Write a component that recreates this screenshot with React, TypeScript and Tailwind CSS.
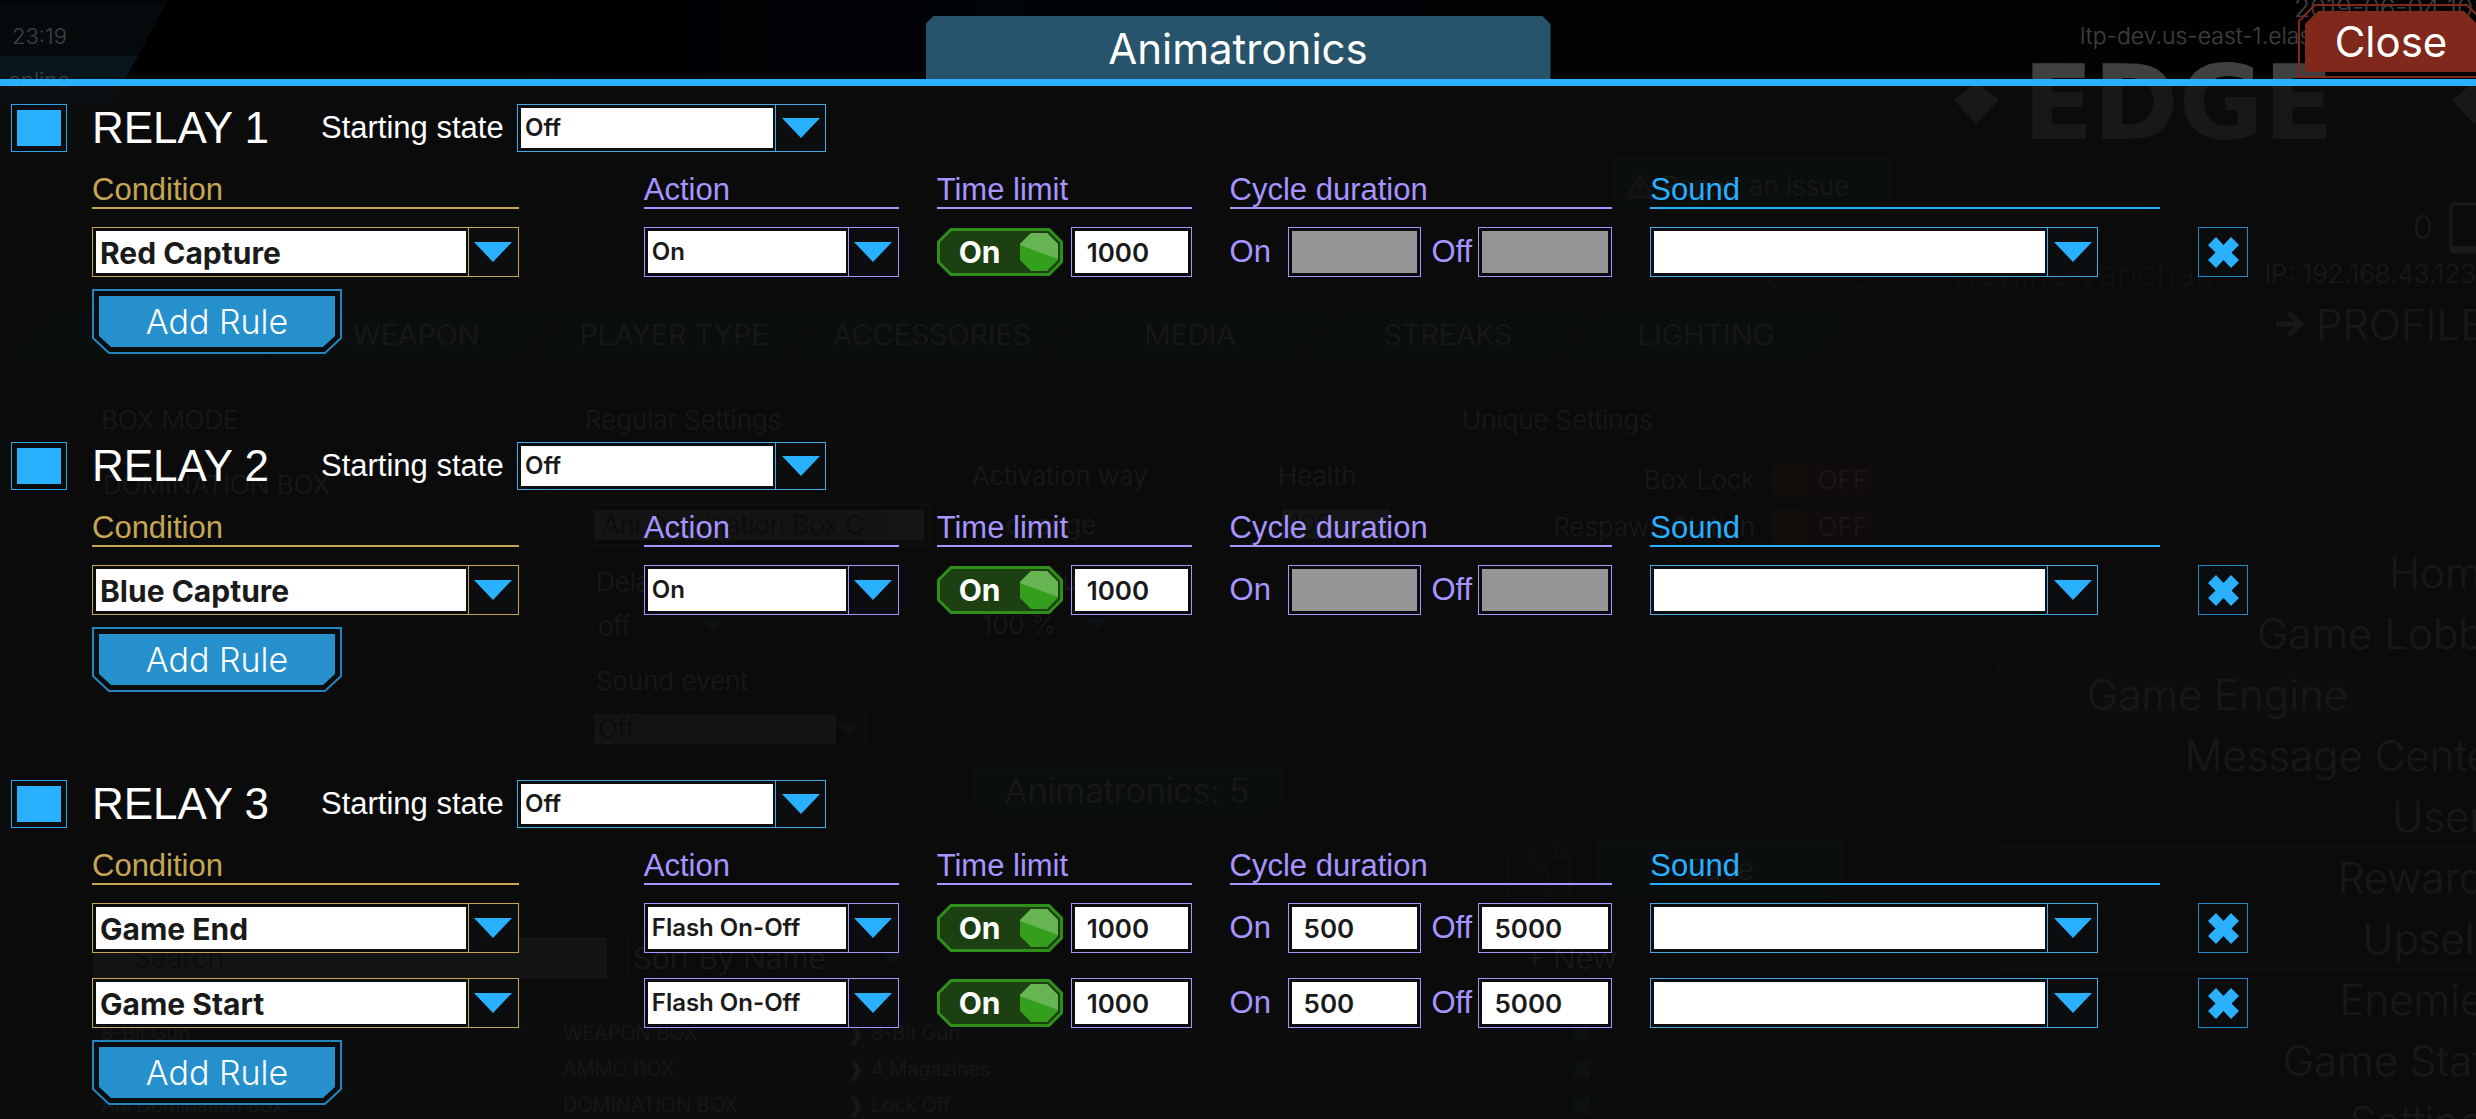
import { useState } from 'react'

type Rule = {
  condition: string
  action: string
  limit: string
  cycleOn: string
  cycleOff: string
}

type Relay = { id: number; rules: Rule[] }

const relays: Relay[] = [
  { id: 1, rules: [{ condition: 'Red Capture', action: 'On', limit: '1000', cycleOn: '', cycleOff: '' }] },
  { id: 2, rules: [{ condition: 'Blue Capture', action: 'On', limit: '1000', cycleOn: '', cycleOff: '' }] },
  {
    id: 3,
    rules: [
      { condition: 'Game End', action: 'Flash On-Off', limit: '1000', cycleOn: '500', cycleOff: '5000' },
      { condition: 'Game Start', action: 'Flash On-Off', limit: '1000', cycleOn: '500', cycleOff: '5000' },
    ],
  },
]

const tones = {
  gold: 'border-[#c6a654]',
  violet: 'border-[#a794ff]',
  blue: 'border-[#45a9e6]',
}

type Tone = keyof typeof tones

const columns =
  'grid grid-cols-[minmax(0,514fr)_minmax(0,255fr)_minmax(0,255fr)_minmax(0,383fr)_minmax(0,510fr)_minmax(0,278fr)] gap-x-[38px]'

function Select({
  id,
  label,
  value,
  options,
  tone,
  className,
}: {
  id?: string
  label?: string
  value: string
  options: string[]
  tone: Tone
  className: string
}) {
  return (
    <div className={`flex border bg-[#0c0d0e] ${tones[tone]} ${className}`}>
      <select
        id={id}
        aria-label={label}
        defaultValue={value}
        className="my-[3px] ml-[3px] mr-0.5 min-w-0 flex-1 appearance-none bg-white pl-1 text-[#1a1a1a] outline-none"
      >
        {options.map((o) => (
          <option key={o} value={o}>
            {o}
          </option>
        ))}
      </select>
      <div className={`flex w-[50px] shrink-0 items-center justify-center border-l ${tones[tone]}`}>
        <svg width="38" height="20" viewBox="0 0 38 20" fill="#29b0ff">
          <path d="M0 0H38L19 20Z" />
        </svg>
      </div>
    </div>
  )
}

function NumberBox({ label, value }: { label: string; value: string }) {
  return (
    <input
      aria-label={label}
      defaultValue={value}
      disabled={!value}
      className="h-[50px] w-0 min-w-0 flex-1 border border-[#a794ff] bg-white bg-clip-content p-[3px] indent-3 font-[Inter] text-[26px] font-semibold text-[#1a1a1a] outline-none disabled:bg-[#969696]"
    />
  )
}

function Toggle() {
  const [on, setOn] = useState(true)

  return (
    <button
      role="switch"
      aria-checked={on}
      aria-label="Time limit"
      onClick={() => setOn(!on)}
      className="relative h-12 w-[126px] shrink-0 text-left"
    >
      <svg className="absolute inset-0" width="126" height="48" viewBox="0 0 126 48">
        <path d="M14 1.5H112L124.5 14V34L112 46.5H14L1.5 34V14Z" fill="#1c4012" stroke="#2f8f1a" strokeWidth="3" />
        <path d="M94 5H110L121 16V32L110 43H94L83 32V16Z" fill="#339f1c" />
        <path d="M94 5H110L121 16V31L83 17V16Z" fill="#66b452" />
      </svg>
      <span className="relative pl-[22px] text-[30px] font-bold text-white">{on ? 'On' : 'Off'}</span>
    </button>
  )
}

function RuleRow({ rule }: { rule: Rule }) {
  return (
    <>
      <div className="pr-[87px]">
        <Select
          label="Condition"
          value={rule.condition}
          options={['Red Capture', 'Blue Capture', 'Game End', 'Game Start']}
          tone="gold"
          className="h-[50px] text-[30px] font-bold"
        />
      </div>
      <Select
        label="Action"
        value={rule.action}
        options={['On', 'Off', 'Flash On-Off']}
        tone="violet"
        className="h-[50px] text-[24px] font-semibold"
      />
      <div className="flex items-center gap-2">
        <Toggle />
        <NumberBox label="Time limit value" value={rule.limit} />
      </div>
      <div className="flex items-center font-[Liberation_Sans] text-[31px] text-[#a794ff]">
        <span className="w-[58px] shrink-0">On</span>
        <NumberBox label="Cycle on" value={rule.cycleOn} />
        <span className="w-[57px] shrink-0 pl-[10px]">Off</span>
        <NumberBox label="Cycle off" value={rule.cycleOff} />
      </div>
      <div className="pr-[62px]">
        <Select label="Sound" value="" options={['']} tone="blue" className="h-[50px] text-[24px]" />
      </div>
      <button
        aria-label="Remove rule"
        className="flex size-[50px] items-center justify-center border border-[#2288c6] bg-[#0b0c0d]"
      >
        <svg width="31" height="31" viewBox="0 0 31 31" fill="#29b0ff">
          <path d="M8 0L15.5 8L23 0L31 8L23.500 15.500L31 23L23 31L15.500 23L8 31L0 23L7.500 15.500L0 8Z" />
        </svg>
      </button>
    </>
  )
}

function RelayBlock({ relay }: { relay: Relay }) {
  const head = 'border-b-2 text-[31px] leading-[34px]'

  return (
    <section className="pl-[11px]">
      <div className="flex h-12 items-center font-[Liberation_Sans] text-white">
        <input
          id={`relay-${relay.id}`}
          type="checkbox"
          defaultChecked
          className="h-12 w-14 appearance-none border border-[#2aa3ea] bg-clip-content p-[5px] checked:bg-[#29b0ff]"
        />
        <label htmlFor={`relay-${relay.id}`} className="w-[229px] pl-[25px] text-[44px]">
          RELAY {relay.id}
        </label>
        <label htmlFor={`state-${relay.id}`} className="w-[221px] pl-[25px] text-[31px]">
          Starting state
        </label>
        <Select
          id={`state-${relay.id}`}
          value="Off"
          options={['Off', 'On']}
          tone="blue"
          className="h-12 w-[309px] font-[Inter] text-[24px] font-semibold"
        />
      </div>

      <div className="pl-[81px]">
        <div className={`mt-[21px] font-[Liberation_Sans] ${columns}`}>
          <div className="pr-[87px]">
            <div className={`${head} border-[#c6a654] text-[#c6a654]`}>Condition</div>
          </div>
          <div className={`${head} border-[#a794ff] text-[#a794ff]`}>Action</div>
          <div className={`${head} border-[#a794ff] text-[#a794ff]`}>Time limit</div>
          <div className={`${head} border-[#a794ff] text-[#a794ff]`}>Cycle duration</div>
          <div className={`${head} border-[#29b0ff] text-[#29b0ff]`}>Sound</div>
        </div>
        <div className={`mt-[18px] gap-y-[25px] ${columns}`}>
          {relay.rules.map((rule) => (
            <RuleRow key={rule.condition} rule={rule} />
          ))}
        </div>
        <button className="relative mt-3 block h-[65px] w-[250px] text-[34px] font-light text-white">
          <svg className="absolute inset-0" width="250" height="65" viewBox="0 0 250 65">
            <path d="M1 1H249V49L233 64H17L1 49Z" fill="#0b0c0d" stroke="#2484bd" strokeWidth="2" />
            <path d="M7 7H243V47L231 58H19L7 47Z" fill="#2590cc" />
          </svg>
          <span className="relative">Add Rule</span>
        </button>
      </div>
    </section>
  )
}

const tabs = ['', 'WEAPON', 'PLAYER TYPE', 'ACCESSORIES', 'MEDIA', 'STREAKS', 'LIGHTING']
const nav = ['Home', 'Game Lobby', 'Game Engine', 'Message Center', 'Users', 'Rewards', 'Upsells', 'Enemies', 'Game Stats', 'Settings']
const boxes = [
  ['8-Bit Gun', 'WEAPON BOX', '8-Bit Gun'],
  ['4 Magazines', 'AMMO BOX', '4 Magazines'],
  ['Ani Domination Box', 'DOMINATION BOX', 'Lock Off'],
]

function Diamond() {
  return (
    <svg className="shrink-0" width="45" height="42" viewBox="0 0 45 42" fill="#fff">
      <path d="M22 0L45 18L22 42L0 18Z" />
    </svg>
  )
}

function DimArrow() {
  return (
    <svg className="ml-auto" width="22" height="12" viewBox="0 0 38 20" fill="#1f6f9c">
      <path d="M0 0H38L19 20Z" />
    </svg>
  )
}

// The page that stays visible, dimmed, behind the modal
function Backdrop() {
  const field = 'flex items-center border-2 border-[#16506f]'

  return (
    <div
      aria-hidden
      className="absolute inset-0 flex flex-col overflow-hidden bg-linear-to-r from-black via-[#061220] via-40% to-[#050505] text-[26px] font-light text-white"
    >
      <div className="flex h-[299px] shrink-0 border-b-2 border-[#16506f]">
        <div className="h-[310px] w-[168px] bg-[#101c24] text-[22px] [clip-path:polygon(0_0,100%_0,0_100%)]">
          <div className="mt-1 h-[52px] bg-[#172a36] pl-3 leading-[64px]">23:19</div>
          <div className="h-12 bg-[#1f5670] pl-2 leading-[48px]">online</div>
        </div>
        <div className="mr-[62px] ml-auto w-[280px] pt-[158px]">
          <div className="flex h-[55px] items-center gap-2 border-2 border-[#16506f] bg-[#123e58] pl-3 [clip-path:polygon(0_0,100%_0,100%_39px,264px_100%,16px_100%,0_39px)]">
            <svg width="28" height="26" viewBox="0 0 28 26" fill="none" stroke="#d0b090" strokeWidth="3">
              <path d="M14 3L26 24H2ZM14 10V17M14 19V21" />
            </svg>
            Report an issue
          </div>
          <div className="mt-7 ml-auto mr-[22px] h-12 w-[102px] rounded-xl border-2 border-[#2f8f1a] bg-[#12330a]" />
        </div>
        <div className="w-[522px] shrink-0 pt-[2px]">
          <div className="pl-[340px] leading-[12px] whitespace-nowrap">2019-06-04 10:12</div>
          <div className="mt-2 pl-[126px] text-[23px] leading-[28px] whitespace-nowrap">ltp-dev.us-east-1.elasticbeanstalk</div>
          <div className="mt-2 flex h-[90px] items-center gap-6">
            <Diamond />
            <span className="w-[405px] shrink-0 font-[DejaVu_Sans] text-[103px] leading-[90px] font-bold">EDGE</span>
            <Diamond />
          </div>
          <div className="flex items-center gap-4 pt-[54px] pl-[459px] text-[32px] leading-[52px]">
            0
            <svg className="shrink-0" width="40" height="52" viewBox="0 0 40 52" fill="none" stroke="#fff" strokeWidth="3">
              <rect x="2" y="2" width="60" height="48" rx="3" />
              <path d="M2 47H40" strokeWidth="6" />
            </svg>
          </div>
          <div className="flex h-[38px] items-center whitespace-nowrap">
            <span className="w-[316px] text-[34px] text-[#1f7fb5]">Kaylina Varichak</span>
            IP: 192.168.43.123
          </div>
        </div>
      </div>

      <div className="flex min-h-0 flex-1">
        <div className="flex-1">
          <div className="mt-[13px] ml-3 flex h-[46px]">
            {tabs.map((t, i) => (
              <div
                key={i}
                className="-mr-[34px] flex w-[292px] shrink-0 items-center justify-center bg-[#123e58] text-[29px] [clip-path:polygon(40px_0,100%_0,252px_100%,0_100%)]"
              >
                {t}
              </div>
            ))}
          </div>
          <div className="ml-[93px] w-[1751px]">
            <div className="mt-10 flex h-12 border-b-2 border-[#16506f] pt-0.5 pl-2">
              <div className="w-[484px]">BOX MODE</div>
              <div className="w-[877px]">Regular Settings</div>
              <div>Unique Settings</div>
            </div>
            <div className="flex h-[383px] border-b-2 border-[#16506f]">
              <div className="w-[474px] border-r border-[#16506f] pt-[14px]">
                <div className={`h-12 w-[458px] pl-2 ${field}`}>DOMINATION BOX</div>
              </div>
              <div className="w-[385px] pt-[58px] pl-[21px]">
                <div className="h-[42px] w-[342px] border-2 border-[#16506f] p-1">
                  <div className="bg-white/70 pl-2 leading-[30px] text-black">Ani Domination Box C</div>
                </div>
                <div className="mt-4 pl-2">Delay</div>
                <div className={`mt-1 h-10 w-[146px] px-2 ${field}`}>
                  off
                  <DimArrow />
                </div>
                <div className="mt-4 pl-2">Sound event</div>
                <div className={`mt-2 h-[42px] w-[278px] p-1 ${field}`}>
                  <div className="w-[242px] bg-white/70 pl-1 leading-[30px] text-black">Off</div>
                  <DimArrow />
                </div>
              </div>
              <div className="w-[493px] border-r border-[#16506f] pt-[10px] pl-5">
                <div className="flex">
                  <span className="w-[306px]">Activation way</span>
                  <span>Health</span>
                </div>
                <div className="mt-2 flex gap-6">
                  <div className={`h-[42px] w-[280px] px-8 ${field}`}>change</div>
                  <div className="h-[42px] w-[120px] border-2 border-[#16506f] p-1">
                    <div className="bg-white/70 pl-2 leading-[30px] text-black">100</div>
                  </div>
                </div>
                <div className="mt-4">Box Volume</div>
                <div className={`mt-1 h-10 w-[146px] px-2 ${field}`}>
                  100 %
                  <DimArrow />
                </div>
                <div className="mt-[124px] h-[46px] w-[310px] border-2 border-[#16506f] bg-[#123e58] text-center text-[34px] leading-[42px] [clip-path:polygon(0_0,100%_0,100%_34px,294px_100%,16px_100%,0_34px)]">
                  Animatronics: 5
                </div>
              </div>
              <div className="-mr-8 flex-1 pt-[14px]">
                {['Box Lock', 'Respawn Station'].map((t) => (
                  <div key={t} className="mb-2 flex h-[39px] items-center justify-end gap-4">
                    {t}
                    <span className="flex h-[38px] w-[105px] items-center justify-between rounded-xl bg-[#5a140c] pr-2">
                      <i className="size-8 rounded-lg bg-[#a02a1c]" />
                      OFF
                    </span>
                  </div>
                ))}
              </div>
            </div>
            <div className="mt-3 flex h-[56px] justify-end gap-6">
              <svg width="67" height="60" viewBox="0 0 67 60" fill="none" stroke="#16506f" strokeWidth="4">
                <path d="M28 12V2H50L65 16V52H44M2 58V12H26L42 28V58ZM26 12V28H42M50 2V16H65" />
              </svg>
              <div className="w-[248px] border-2 border-[#16506f] bg-[#123e58] text-center text-[30px] leading-[52px] [clip-path:polygon(0_0,100%_0,100%_40px,232px_100%,16px_100%,0_40px)]">
                Save
              </div>
            </div>
            <div className="mt-9 flex h-[50px] items-center gap-5 text-[30px]">
              <div className="h-[42px] w-[514px] bg-white/70 pl-10 text-[28px] leading-[42px] text-black">Search</div>
              <div className={`h-[50px] w-[283px] px-1 ${field}`}>
                Sort By Name
                <DimArrow />
              </div>
              <div className="ml-auto pr-[227px]">+ New</div>
            </div>
            <div className="mt-8 text-[20px] leading-[36px]">
              {boxes.map(([name, kind, item]) => (
                <div key={kind} className="flex h-9 items-center gap-1">
                  <div className="flex w-[1468px] border-b border-[#16506f] bg-[#0e2c3e] pl-2">
                    <span className="w-[462px]">{name}</span>
                    <span className="w-[284px]">{kind}</span>
                    <span className="w-6">❱</span>
                    <span>{item}</span>
                  </div>
                  <svg width="34" height="32" viewBox="0 0 34 32" fill="none" stroke="#1f7fb5">
                    <path d="M1 1H33V31H1Z" />
                    <path d="M10 8L24 24M24 8L10 24" strokeWidth="7" />
                  </svg>
                </div>
              ))}
            </div>
          </div>
        </div>

        <div className="w-[480px] shrink-0 text-[42px] whitespace-nowrap">
          <div className="flex h-[50px] items-center">
            <i className="mr-3 w-[268px] shrink-0 border-t-4 border-dotted border-white/40" />
            <svg className="mr-3 shrink-0" width="28" height="28" viewBox="0 0 28 28" fill="none" stroke="#fff" strokeWidth="5">
              <path d="M0 14H24M12 2L25 14L12 26" />
            </svg>
            PROFILE
          </div>
          <div className="mt-[194px] -mr-10">
            {nav.map((n) => (
              <div
                key={n}
                className={
                  n === 'Game Engine'
                    ? 'h-[61px] border-b-2 border-[#16506f] bg-[#0e2c3e] pr-[168px] text-right leading-[60px]'
                    : 'h-[61px] border-b-2 border-[#16506f] pr-[10px] text-right leading-[60px]'
                }
              >
                {n}
              </div>
            ))}
          </div>
        </div>
      </div>
    </div>
  )
}

export default function App() {
  return (
    <div className="relative min-h-screen overflow-hidden bg-black font-[Inter]">
      <Backdrop />
      <div className="relative flex min-h-screen flex-col">
        <header className="flex h-[86px] items-end justify-between border-b-[7px] border-[#29b0ff] bg-black/75">
          <div className="flex-1" />
          <h1 className="h-[63px] w-[625px] bg-[#27536b] text-center text-[42px] leading-[66px] text-white [clip-path:polygon(8px_0,calc(100%-8px)_0,100%_8px,100%_100%,0_100%,0_8px)]">
            Animatronics
          </h1>
          <div className="flex flex-1 justify-end overflow-hidden">
            <button className="relative -mr-2 h-[75px] w-[186px] text-[42px] text-white">
              <svg className="absolute inset-0" width="186" height="75" viewBox="0 0 186 75">
                <path d="M1 73V17L17 1H169L185 17V73Z" fill="none" stroke="#80281b" strokeWidth="2" />
                <path d="M7 68V20L20 7H166L179 20V68Z" fill="#80281b" />
              </svg>
              <span className="relative">Close</span>
            </button>
          </div>
        </header>
        <main className="flex flex-1 flex-col gap-[88px] bg-[#0c0c0c]/95 pt-[18px] pb-3">
          {relays.map((relay) => (
            <RelayBlock key={relay.id} relay={relay} />
          ))}
        </main>
      </div>
    </div>
  )
}
